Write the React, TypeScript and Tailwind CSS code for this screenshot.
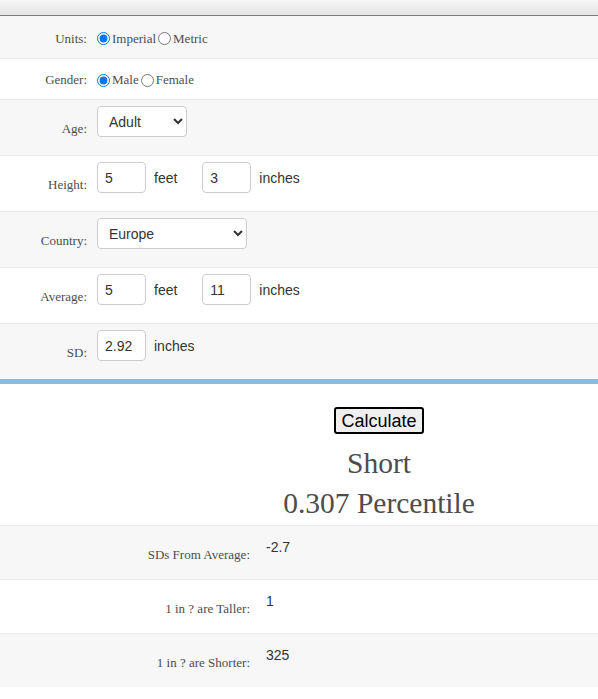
import { useState } from "react";

const serif = "font-['Liberation_Serif',serif]";
const sans = "font-['Liberation_Sans',Arial,sans-serif]";

function Label({ text }: { text: string }) {
  return (
    <div className={`w-[87px] shrink-0 text-right mt-[21px] leading-[15px] text-[13px] text-[#4d4d4d] ${serif}`}>
      {text}
    </div>
  );
}

function NumBox({ value, onChange }: { value: string; onChange: (v: string) => void }) {
  return (
    <input
      value={value}
      onChange={(e) => onChange(e.target.value)}
      className={`w-[49px] h-[31px] border border-[#ccc] rounded-[4px] bg-white px-[7px] text-[14px] text-[#333] ${sans}`}
    />
  );
}

function Unit({ text }: { text: string }) {
  return <span className={`ml-[8px] text-[14px] text-[#333] leading-[32px] ${sans}`}>{text}</span>;
}

function ResultRow({ label, value, grey }: { label: string; value: string; grey?: boolean }) {
  return (
    <div className={`flex h-[54px] border-b border-[#ebebeb] ${grey ? "bg-[#f7f7f7]" : "bg-white"}`}>
      <div className={`w-[250px] shrink-0 text-right mt-[21px] leading-[15px] text-[13px] text-[#4d4d4d] ${serif}`}>
        {label}
      </div>
      <div className={`pl-[16px] mt-[13px] leading-[16px] text-[14px] text-[#333] ${sans}`}>{value}</div>
    </div>
  );
}

export default function App() {
  const [units, setUnits] = useState("imperial");
  const [gender, setGender] = useState("male");
  const [age, setAge] = useState("adult");
  const [country, setCountry] = useState("europe");
  const [feet, setFeet] = useState("5");
  const [inches, setInches] = useState("3");
  const [avgFeet, setAvgFeet] = useState("5");
  const [avgInches, setAvgInches] = useState("11");
  const [sd, setSd] = useState("2.92");

  return (
    <div className="w-[598px] min-h-[699px] bg-white">
      <div className="h-[16px] bg-gradient-to-b from-[#f7f7f7] to-[#e4e4e4] border-b border-[#7d7d7d]" />

      {/* units */}
      <div className="flex items-center h-[43px] pt-[3px] bg-[#f7f7f7] border-b border-[#ebebeb]">
        <div className={`w-[87px] text-right text-[13px] text-[#4d4d4d] ${serif}`}>Units:</div>
        <div className={`flex items-center ml-[10px] text-[13px] text-[#4d4d4d] ${serif}`}>
          <input type="radio" name="units" checked={units === "imperial"} onChange={() => setUnits("imperial")} />
          <span className="ml-[2px] mr-[2px]">Imperial</span>
          <input type="radio" name="units" checked={units === "metric"} onChange={() => setUnits("metric")} />
          <span className="ml-[2px]">Metric</span>
        </div>
      </div>

      {/* gender */}
      <div className="flex items-center h-[41px] pt-[2px] bg-white border-b border-[#ebebeb]">
        <div className={`w-[87px] text-right text-[13px] text-[#4d4d4d] ${serif}`}>Gender:</div>
        <div className={`flex items-center ml-[10px] text-[13px] text-[#4d4d4d] ${serif}`}>
          <input type="radio" name="gender" checked={gender === "male"} onChange={() => setGender("male")} />
          <span className="ml-[2px] mr-[2px]">Male</span>
          <input type="radio" name="gender" checked={gender === "female"} onChange={() => setGender("female")} />
          <span className="ml-[2px]">Female</span>
        </div>
      </div>

      {/* age */}
      <div className="flex h-[56px] bg-[#f7f7f7] border-b border-[#ebebeb]">
        <Label text="Age:" />
        <div className="ml-[10px] mt-[6px]">
          <select
            value={age}
            onChange={(e) => setAge(e.target.value)}
            className={`w-[90px] h-[31px] border border-[#ccc] rounded-[4px] bg-white pl-[7px] text-[14px] text-[#333] ${sans}`}
          >
            <option value="adult">Adult</option>
            <option value="child">Child</option>
          </select>
        </div>
      </div>

      {/* height */}
      <div className="flex h-[56px] bg-white border-b border-[#ebebeb]">
        <Label text="Height:" />
        <div className="flex ml-[10px] mt-[6px]">
          <NumBox value={feet} onChange={setFeet} />
          <Unit text="feet" />
          <div className="ml-[25px]">
            <NumBox value={inches} onChange={setInches} />
          </div>
          <Unit text="inches" />
        </div>
      </div>

      {/* country */}
      <div className="flex h-[56px] bg-[#f7f7f7] border-b border-[#ebebeb]">
        <Label text="Country:" />
        <div className="ml-[10px] mt-[6px]">
          <select
            value={country}
            onChange={(e) => setCountry(e.target.value)}
            className={`w-[150px] h-[31px] border border-[#ccc] rounded-[4px] bg-white pl-[7px] text-[14px] text-[#333] ${sans}`}
          >
            <option value="europe">Europe</option>
            <option value="usa">United States</option>
          </select>
        </div>
      </div>

      {/* average */}
      <div className="flex h-[56px] bg-white border-b border-[#ebebeb]">
        <Label text="Average:" />
        <div className="flex ml-[10px] mt-[6px]">
          <NumBox value={avgFeet} onChange={setAvgFeet} />
          <Unit text="feet" />
          <div className="ml-[25px]">
            <NumBox value={avgInches} onChange={setAvgInches} />
          </div>
          <Unit text="inches" />
        </div>
      </div>

      {/* sd */}
      <div className="flex h-[55px] bg-[#f7f7f7]">
        <Label text="SD:" />
        <div className="flex ml-[10px] mt-[6px]">
          <NumBox value={sd} onChange={setSd} />
          <Unit text="inches" />
        </div>
      </div>

      <div className="h-[5px] bg-[#7fc1e1]" />

      {/* result */}
      <div className="ml-[160px] pt-[23px] pb-[2px] flex flex-col items-center">
        <button
          className={`w-[90px] h-[27px] border-2 border-black rounded-[3px] bg-[#efefef] text-[18px] leading-none text-black ${sans}`}
        >
          Calculate
        </button>
        <div className={`mt-[9px] text-[29.5px] leading-[40px] text-[#4d4d4d] ${serif}`}>Short</div>
        <div className={`text-[29.5px] leading-[40px] text-[#4d4d4d] ${serif}`}>0.307 Percentile</div>
      </div>

      <div className="border-t border-[#ebebeb]">
        <ResultRow label="SDs From Average:" value="-2.7" grey />
        <ResultRow label="1 in ? are Taller:" value="1" />
        <div className="flex h-[53px] bg-[#f7f7f7]">
          <div className={`w-[250px] shrink-0 text-right mt-[21px] leading-[15px] text-[13px] text-[#4d4d4d] ${serif}`}>
            1 in ? are Shorter:
          </div>
          <div className={`pl-[16px] mt-[13px] leading-[16px] text-[14px] text-[#333] ${sans}`}>325</div>
        </div>
      </div>
    </div>
  );
}
